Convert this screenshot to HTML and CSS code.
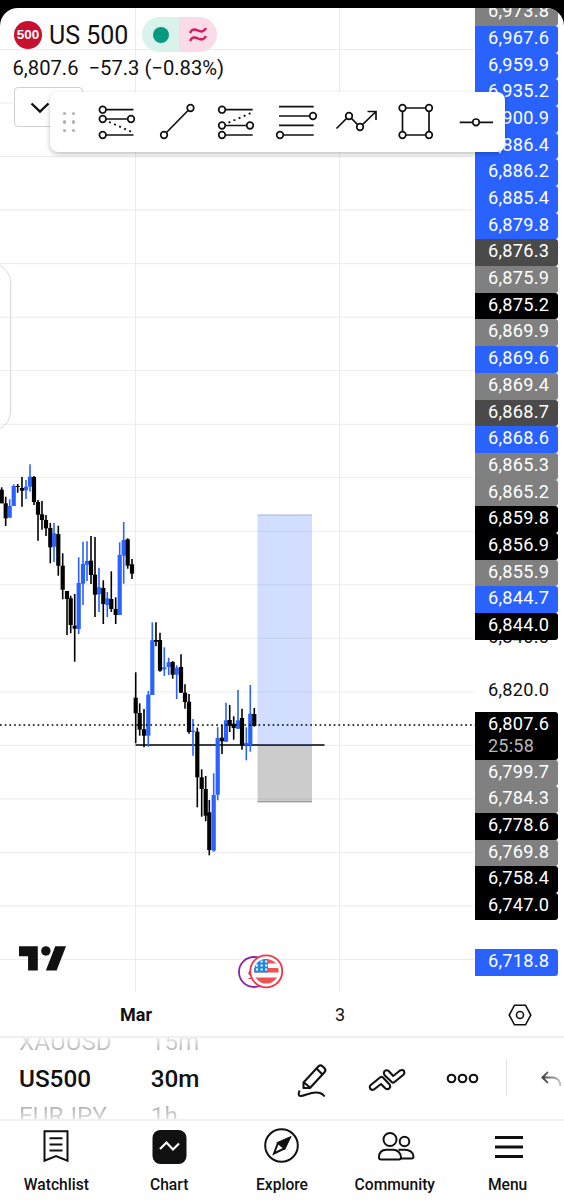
FILE: index.html
```html
<!DOCTYPE html>
<html lang="en">
<head>
    <meta charset="UTF-8">
    <meta name="viewport" content="width=device-width, initial-scale=1.0">
    <title>US 500 chart</title>
    <link rel="stylesheet" href="styles.css">
</head>
<body>

    <div class="app">
        <div class="chart">
            <div class="plot">
                <svg class="plot-svg" id="plot" width="475" height="984" viewBox="0 8 475 984"></svg>

                <div class="legend">
                    <div class="symbol-row">
                        <span class="symbol-logo">500</span>
                        <span class="symbol-name">US 500</span>
                        <span class="status">
                            <span class="status-open"><i></i></span>
                            <span class="status-approx">
                                <svg width="18" height="16" viewBox="0 0 18 16" fill="none" stroke="#d81b60" stroke-width="2.5"><path d="M1 6C3 1.5 6 2 9 3.5S15 5 17 1M1 14C3 9.5 6 10 9 11.5S15 13 17 9"/></svg>
                            </span>
                        </span>
                    </div>
                    <div class="quote"><span>6,807.6</span><span>−57.3 (−0.83%)</span></div>
                    <div class="collapse">
                        <svg width="20" height="12" viewBox="0 0 20 12" fill="none" stroke="#111" stroke-width="2.4"><path d="M1.5 1.5L10 9.5L18.5 1.5"/></svg>
                    </div>
                </div>

                <div class="side-handle"></div>

                <svg class="tv-logo" width="47" height="25" viewBox="0 0 140 73" fill="#111"><path d="M0 0H56V72H27V30H0Z"/><circle cx="80" cy="14" r="14"/><path d="M108 0H140L112 72H80Z"/></svg>

                <svg class="events" width="48" height="36" viewBox="0 0 48 36">
                    <defs><clipPath id="flag"><circle cx="29.3" cy="17.3" r="12.3"/></clipPath></defs>
                    <circle cx="17" cy="18" r="15" fill="#fff" stroke="#8e24aa" stroke-width="1.8"/>
                    <path d="M11 19h4M12.5 17v4M11.5 24.5h3" stroke="#e91e63" stroke-width="1"/>
                    <circle cx="29.3" cy="17.3" r="16" fill="#fff" stroke="#f23645" stroke-width="1.8"/>
                    <g clip-path="url(#flag)">
                        <path fill="#fff" d="M16 4h28v27H16z"/>
                        <path fill="#ef5350" d="M16 5h28v4.500H16zM16 14h28v4.500H16zM16 23.500h28v7H16z"/>
                        <path fill="#1e88e5" d="M16 4h15v14.500H16z"/>
                        <path stroke="#fff" stroke-width="1.900" stroke-dasharray="2 2.600" d="M19 7.500h12M19 11.500h12M19 15.500h12"/>
                    </g>
                </svg>

                <div class="time-axis">
                    <span class="month">Mar</span>
                    <span class="day">3</span>
                </div>
            </div>

            <div class="scale">
                <div class="labels" id="labels"></div>
                <div class="tick tick-hidden">6,840.0</div>
                <div class="tick">6,820.0</div>
                <div class="current">6,807.6<small>25:58</small></div>
                <div class="labels" id="lowerLabels"></div>
                <div class="label blue label-last">6,718.8</div>
                <div class="scale-settings">
                    <svg width="24" height="22" viewBox="0 0 24 22" fill="none" stroke="#111" stroke-width="1.6"><path d="M6.5 1.2h11L22.8 11l-5.3 9.8h-11L1.2 11z"/><circle cx="12" cy="11" r="3.5"/></svg>
                </div>
            </div>

            <div class="toolbar">
                <div class="grip"><i></i><i></i><i></i><i></i><i></i><i></i></div>
                <svg class="tool" viewBox="0 0 40 40"><path d="M7 8.700H37.500M7 18H35M7 34H37.500"/><path class="dots" d="M13 21L36 31"/><circle cx="6.7" cy="8.7" r="3.3"/><circle cx="6.7" cy="18" r="3.3"/><circle cx="35" cy="18" r="3.3"/><circle cx="6.7" cy="34" r="3.3"/></svg>
                <svg class="tool" viewBox="0 0 40 40"><path d="M8 34L34.500 7"/><circle cx="34.5" cy="7" r="3.3"/><circle cx="8" cy="34" r="3.3"/></svg>
                <svg class="tool" viewBox="0 0 40 40"><path d="M6 8.700H36.700M6 24.500H34M6 34H36.700"/><path class="dots" d="M12.500 21.700L35 12"/><circle cx="6" cy="8.7" r="3.3"/><circle cx="6" cy="24.5" r="3.3"/><circle cx="34" cy="24.5" r="3.3"/><circle cx="6" cy="34" r="3.3"/></svg>
                <svg class="tool" viewBox="0 0 40 40"><path d="M3 5.600H37.700M3 15H37M3 24.400H37.700M4 34H37.700"/><circle cx="37" cy="15" r="3.3"/><circle cx="4" cy="34" r="3.3"/></svg>
                <svg class="tool" viewBox="0 0 40 40"><path d="M.5 27.500L13 15L24 26L40 10.500M31.500 10.500H40V19"/><circle cx="13" cy="15" r="3.3"/><circle cx="24" cy="26" r="3.3"/></svg>
                <svg class="tool" viewBox="0 0 40 40"><path d="M6.500 7H33V34H6.500Z"/><circle cx="6.5" cy="7" r="3.3"/><circle cx="33" cy="7" r="3.3"/><circle cx="6.5" cy="34" r="3.3"/><circle cx="33" cy="34" r="3.3"/></svg>
                <svg class="tool" viewBox="0 0 40 40"><path d="M3.700 21.300H37"/><circle cx="20" cy="21.3" r="3.3"/></svg>
            </div>
        </div>

        <div class="picker">
            <div class="wheel wheel-symbol">
                <span>XAUUSD</span>
                <strong>US500</strong>
                <span>EURJPY</span>
            </div>
            <div class="wheel wheel-interval">
                <span>15m</span>
                <strong>30m</strong>
                <span>1h</span>
            </div>
            <div class="actions">
                <svg class="action" viewBox="0 0 40 40"><path d="M11.500 24.500L26.500 8.300Q28.500 6.500 30.500 8.300L32.500 10.300Q34.300 12.300 32.500 14.300L18 30H11.500ZM11.500 24L18 29.500M24.500 10.500L30.500 16.500"/><path d="M7.500 32.500Q5.500 38 8.500 38C13 38 17 34.500 24 34.500Q30 34.500 32.500 38.500"/></svg>
                <svg class="action" viewBox="0 0 40 40"><path d="M3.200 27.500L13 19.500Q14.500 18.300 16 19.500L22.600 26.500Q23.800 28.500 22.500 30.200Q20.500 32 18.500 30.500L14 26L7 31.500Q4.500 32.500 3.200 30.700Q2.200 29 3.200 27.500Z"/><path d="M17.400 13.300Q19.500 11.300 21.700 13L26.200 18L33 12.500Q35.500 11.200 37 13Q38 15 36.700 16.500L27.500 24Q26 25.200 24.700 24L17.400 17Q16.200 15 17.400 13.300Z"/></svg>
                <svg class="action" viewBox="0 0 40 40"><circle cx="9.5" cy="20.5" r="3.8"/><circle cx="20.5" cy="20.5" r="3.8"/><circle cx="31.5" cy="20.5" r="3.8"/></svg>
            </div>
            <div class="undo">
                <svg width="24" height="22" viewBox="0 0 24 22" fill="none" stroke="url(#fade)" stroke-width="2"><defs><linearGradient id="fade" gradientUnits="userSpaceOnUse" x1="0" y1="0" x2="24" y2="0"><stop offset="0" stop-color="#333"/><stop offset="1" stop-color="#ddd"/></linearGradient></defs><path d="M8 3L2.500 8.500L8 14M2.500 8.500H13Q20 9 20.500 17"/></svg>
            </div>
        </div>

        <div class="nav">
            <div class="nav-item">
                <svg viewBox="0 0 40 40"><path d="M8.500 4.200H31.500V33.700L20 29L8.500 33.700Z"/><path d="M13.500 11.200H26.500M13.500 17.500H26.500M13.500 23.500H26.500"/></svg>
                Watchlist
            </div>
            <div class="nav-item">
                <svg viewBox="0 0 40 40"><rect x="3.5" y="3" width="34" height="34" rx="8" fill="#111" stroke="none"/><path class="light" d="M11 22L17.500 15.500L24 22.500L30 16.500"/></svg>
                Chart
            </div>
            <div class="nav-item">
                <svg viewBox="0 0 40 40"><circle cx="19.5" cy="18.5" r="16.3"/><path d="M27.500 11L16 16L12 26.500L22.500 21.500Z"/><path d="M27.500 11L16 16L22.500 21.500Z" fill="#111"/></svg>
                Explore
            </div>
            <div class="nav-item">
                <svg viewBox="0 0 40 40"><circle cx="15" cy="12.500" r="6.500"/><circle cx="29.5" cy="14.500" r="4.800"/><path d="M4 30.500C4 25 7.500 22.800 11.500 22.800H18C22.500 22.800 26 26 26 30.500Q26 32.500 24 32.500H6Q4 32.500 4 30.500ZM23.500 22.800H30C34.500 22.800 38.500 25.500 38.500 29.500Q38.500 31.500 36.500 31.500H26"/></svg>
                Community
            </div>
            <div class="nav-item">
                <svg viewBox="0 0 40 40"><path stroke-width="3" d="M7 10.500H35M7 20H35M7 29.500H35"/></svg>
                Menu
            </div>
        </div>
    </div>

    <script>
        const BLUE = "#2962ff";
        const BLACK = "#000";

        // x, high, body top, body bottom, low, up
        const candles = [
            [1.7, 487.3, 489.7, 503.3, 503.3, 0],
            [5.7, 496.7, 503.3, 518.3, 526, 0],
            [9.7, 499.3, 506, 517.7, 517.7, 1],
            [13.7, 484.3, 486, 506, 506, 1],
            [17.7, 484, 486, 487, 492.7, 0],
            [22, 477, 488, 490.7, 506.7, 0],
            [26, 480, 486.7, 490.3, 499, 1],
            [30, 464.3, 476.7, 486.7, 491.7, 1],
            [34, 476, 477, 502, 505, 0],
            [38, 500, 502, 514.7, 540.7, 0],
            [42, 501, 514.3, 520, 529.7, 0],
            [46, 515, 520, 528.3, 536, 0],
            [50.3, 523, 528, 547.3, 563.3, 0],
            [54, 523, 533.3, 546.7, 562, 1],
            [58.3, 525.7, 534, 565.7, 575.7, 0],
            [62.7, 553.3, 565.7, 589.7, 599.3, 0],
            [67, 591, 591, 599, 635, 0],
            [70.7, 595.7, 598.3, 625, 633.3, 0],
            [74.7, 594, 625.7, 628.7, 661.7, 0],
            [78.7, 557.3, 583, 629, 634, 1],
            [83, 541.7, 564, 583.7, 605, 1],
            [87, 541.3, 561, 564.7, 581, 1],
            [91, 536, 560.7, 575, 584, 0],
            [95, 537, 574.7, 594.7, 617, 0],
            [99, 567.7, 587.3, 594.3, 612, 1],
            [103.3, 580.3, 588, 604, 624, 0],
            [107.3, 592, 598.3, 605, 617, 1],
            [111.3, 571.3, 599, 609, 612, 0],
            [115.7, 597.3, 609, 615, 624, 0],
            [119.7, 542.3, 555, 615, 615, 1],
            [123.7, 522, 540, 555.7, 583.7, 1],
            [127.7, 538.3, 539.3, 565.7, 568.7, 0],
            [132, 559, 564.3, 573.7, 579, 0],
            [135.7, 672.3, 697.7, 713.3, 743.3, 0],
            [139.7, 703.3, 713, 729.7, 735.7, 0],
            [144, 709, 729.3, 735.7, 747.3, 0],
            [148.3, 691, 694.7, 735.7, 746.7, 1],
            [152.3, 622.3, 640.3, 695, 695, 1],
            [156, 622.3, 640, 641.7, 646.3, 0],
            [160, 632.7, 640, 670.7, 671.7, 0],
            [164.3, 647.3, 667.3, 669.3, 676, 1],
            [168.7, 657.7, 662.3, 667, 675, 1],
            [172.7, 661, 662, 674.7, 678.7, 0],
            [176.7, 665.3, 667.7, 674.7, 699, 1],
            [181, 654.3, 667, 692.7, 692.7, 0],
            [185, 684.3, 692.7, 702, 708.7, 0],
            [189, 694, 701.7, 732, 733.7, 0],
            [193, 719, 730.7, 732, 755.7, 1],
            [197.3, 727.7, 731.7, 777.3, 807.3, 0],
            [201.7, 769.3, 777.3, 789, 816.7, 0],
            [205.7, 776, 789, 815.7, 821.3, 0],
            [209.3, 800, 812.3, 850, 855.3, 0],
            [213.7, 773.3, 795, 850.7, 851.7, 1],
            [217.7, 727.3, 738, 794.7, 800.3, 1],
            [222, 725, 737.7, 741.3, 754, 0],
            [226, 702.7, 720.3, 741.7, 741.7, 1],
            [229.7, 705, 720, 725.7, 732, 0],
            [233.7, 716.3, 723.7, 728, 739.7, 0],
            [238, 690, 720.3, 728.7, 729, 1],
            [242, 708.7, 718, 745.3, 749.7, 0],
            [246.3, 727.3, 743, 744.7, 760.3, 1],
            [250.3, 685, 713.7, 744.7, 751.7, 1],
            [254.3, 708, 714, 726, 726.7, 0]
        ];

        const labels = [
            ["6,973.8", "gray"], ["6,967.6", "blue"], ["6,959.9", "blue"], ["6,935.2", "blue"],
            ["6,900.9", "blue"], ["6,886.4", "blue"], ["6,886.2", "blue"], ["6,885.4", "blue"],
            ["6,879.8", "blue"], ["6,876.3", "dark"], ["6,875.9", "gray"], ["6,875.2", "black"],
            ["6,869.9", "gray"], ["6,869.6", "blue"], ["6,869.4", "gray"], ["6,868.7", "dark"],
            ["6,868.6", "blue"], ["6,865.3", "gray"], ["6,865.2", "gray"], ["6,859.8", "black"],
            ["6,856.9", "black"], ["6,855.9", "gray"], ["6,844.7", "blue"], ["6,844.0", "black"]
        ];

        const lowerLabels = [
            ["6,799.7", "gray"], ["6,784.3", "gray"], ["6,778.6", "black"],
            ["6,769.8", "gray"], ["6,758.4", "black"], ["6,747.0", "black"]
        ];

        function renderPlot() {
            let svg = "";
            // grid
            for (let i = 0; i < 18; i++) {
                const y = 49.5 + i * 53.53;
                svg += `<path d="M0 ${y}H474" stroke="#ececec"/>`;
            }
            svg += `<path d="M135.5 8V992M339.5 8V992" stroke="#ececec"/>`;
            // support line
            svg += `<path d="M135.5 745H324.5" stroke="#000" stroke-width="1.7"/>`;
            candles.forEach(([x, high, top, bottom, low, up]) => {
                const color = up ? BLUE : BLACK;
                svg += `<path d="M${x} ${high}V${low}" stroke="${color}" stroke-width="1.6"/>`;
                svg += `<rect x="${x - 2.1}" y="${top}" width="4.2" height="${bottom - top}" fill="${color}"/>`;
            });
            // long position
            svg += `<rect x="257.5" y="514.5" width="54.5" height="230.5" fill="#2962ff" fill-opacity=".21"/>`;
            svg += `<rect x="257.5" y="745" width="54.5" height="57" fill="#000" fill-opacity=".2"/>`;
            svg += `<path d="M257.5 515H312" stroke="#2b3f9e" stroke-opacity=".25"/>`;
            svg += `<path d="M257.5 801.8H312" stroke="#888"/>`;
            // last price
            svg += `<path d="M0 725H475" stroke="#000" stroke-width="1.7" stroke-dasharray="1.7 3"/>`;
            document.getElementById("plot").innerHTML = svg;
        }

        function renderLabels(id, items) {
            document.getElementById(id).innerHTML = items.map(([price, color]) => `<div class="label ${color}">${price}</div>`).join("");
        }

        renderPlot();
        renderLabels("labels", labels);
        renderLabels("lowerLabels", lowerLabels);
    </script>

</body>
</html>
```
FILE: styles.css
```css
* {
    box-sizing: border-box;
}
body {
    margin: 0;
    padding-top: 8px;
    background: #000;
    font-family: Roboto, "Liberation Sans", sans-serif;
    color: #111;
}
svg {
    display: block;
}
.app {
    width: 564px;
    height: 1192px;
    background: #fff;
    border-radius: 18px 18px 0 0;
    overflow: hidden;
}
.chart {
    position: relative;
    display: flex;
    height: 1028px;
}
.plot {
    position: relative;
    width: 475px;
}

/* legend */
.legend {
    position: absolute;
    top: 9px;
    left: 14px;
}
.symbol-row {
    display: flex;
    align-items: center;
    height: 35px;
}
.symbol-logo {
    width: 28px;
    height: 28px;
    border-radius: 50%;
    background: #c8102e;
    color: #fff;
    font: bold 13.5px/28px "Liberation Sans", sans-serif;
    text-align: center;
}
.symbol-name {
    width: 93px;
    padding-left: 7px;
    font-size: 25px;
    line-height: 35px;
    padding-top: 1px;
    white-space: nowrap;
}
.status {
    display: flex;
    width: 75px;
    height: 35px;
    margin-left: 6.5px;
    border-radius: 18px;
    overflow: hidden;
}
.status span {
    display: flex;
    align-items: center;
    justify-content: center;
    width: 50%;
}
.status-open {
    background: #d9f2ec;
}
.status-open i {
    width: 16px;
    height: 16px;
    margin-left: 2px;
    border-radius: 50%;
    background: #089981;
}
.status-approx {
    background: #fadbe7;
}
.quote {
    display: flex;
    gap: 10px;
    margin-left: -1.5px;
    height: 34.5px;
    line-height: 32px;
    font-size: 20.2px;
    white-space: nowrap;
}
.collapse {
    width: 69px;
    height: 40px;
    padding: 14px 0 0 15px;
    background: #fff;
    border: 1px solid #d0d0d0;
    border-radius: 4px;
}
.side-handle {
    position: absolute;
    top: 255px;
    left: -30px;
    width: 41px;
    height: 168px;
    border: 1px solid #ddd;
    border-radius: 20px;
    box-shadow: 0 0 2px rgba(0,0,0,0.1);
}
.tv-logo {
    position: absolute;
    top: 938px;
    left: 19px;
}
.events {
    position: absolute;
    top: 946px;
    left: 237px;
}
.time-axis {
    display: flex;
    height: 44px;
    line-height: 45px;
    font-size: 18px;
    text-align: center;
}
.month {
    width: 272px;
    font-weight: 700;
}
.day {
    width: 136px;
}

/* price scale */
.scale {
    width: 83px;
    font-size: 18.2px;
    letter-spacing: 0.25px;
}
.labels {
    position: relative;
    z-index: 1;
}
#labels {
    margin-top: -8.8px;
}
.label {
    height: 26.7px;
    padding-left: 13px;
    line-height: 24.5px;
    color: #fff;
    border-radius: 0 3px 3px 0;
}
.blue {
    background: #2962ff;
}
.gray {
    background: #808080;
}
.dark {
    background: #4a4a4a;
}
.black {
    background: #000;
}
.tick {
    height: 26px;
    margin-top: 27px;
    padding-left: 13px;
    line-height: 26px;
}
.tick-hidden {
    margin-top: -16px;
}
.current {
    height: 48px;
    margin-top: 9px;
    padding: 1px 0 0 13px;
    line-height: 22px;
    color: #fff;
    background: #000;
    border-radius: 0 3px 3px 0;
}
.current small {
    display: block;
    font-size: 18px;
    color: #b8b8b8;
}
.label-last {
    margin-top: 29px;
}
.scale-settings {
    display: flex;
    margin: 28px 0 0 33px;
}

/* favourite drawing tools */
.toolbar {
    position: absolute;
    z-index: 2;
    top: 84px;
    left: 50px;
    display: flex;
    gap: 20px;
    width: 455px;
    height: 60px;
    padding: 9px 0 0 12px;
    background: #fff;
    border-radius: 8px;
    box-shadow: 0 2px 5px rgba(0,0,0,0.25);
}
.grip {
    display: grid;
    grid-template-columns: 3px 3px;
    gap: 5px 6px;
    align-content: start;
    width: 14px;
    padding: 11px 0 0 1px;
}
.grip i {
    width: 3.4px;
    height: 3.4px;
    border-radius: 50%;
    background: #b0b0b0;
}
.tool {
    flex: none;
    width: 40px;
    height: 40px;
    overflow: visible;
    fill: none;
    stroke: #111;
    stroke-width: 1.7;
}
.tool circle {
    fill: #fff;
}
.dots {
    stroke-width: 1.8;
    stroke-dasharray: 2 3.5;
}

/* symbol and interval picker */
.picker {
    display: flex;
    height: 85px;
    border-top: 2px solid #f0f0f0;
    border-bottom: 2px solid #f0f0f0;
    overflow: hidden;
}
.wheel {
    height: 81px;
    overflow: hidden;
    font-size: 24.3px;
    line-height: 37px;
}
.wheel span,
.wheel strong {
    display: block;
    height: 37px;
    margin-top: -15px;
    font-weight: 500;
}
.wheel strong,
.wheel span:last-child {
    margin-top: 0;
}
.wheel span {
    font-weight: 400;
    color: transparent;
    background: linear-gradient(#fff 25%, #909090);
    background-clip: text;
    -webkit-background-clip: text;
}
.wheel span:last-child {
    background-image: linear-gradient(#909090, #fff 85%);
}
.wheel-symbol {
    width: 151px;
    padding-left: 19px;
}
.wheel-interval {
    width: 142px;
}
.actions {
    display: flex;
    gap: 35px;
    width: 214px;
    padding-top: 20px;
}
.action {
    width: 40px;
    height: 40px;
    overflow: visible;
    fill: none;
    stroke: #111;
    stroke-width: 2.1;
    stroke-linejoin: round;
}
.undo {
    height: 37px;
    margin-top: 21px;
    padding: 10px 0 0 33px;
    border-left: 1px solid #e4e4e4;
}

/* bottom navigation */
.nav {
    display: flex;
    height: 79px;
    padding-top: 6px;
}
.nav-item {
    display: flex;
    flex-direction: column;
    align-items: center;
    width: 20%;
    font-size: 15.6px;
    font-weight: 500;
    line-height: 20px;
}
.nav-item svg {
    width: 40px;
    height: 40px;
    margin-bottom: 8px;
    fill: none;
    stroke: #111;
    stroke-width: 2;
}
.nav-item .light {
    stroke: #fff;
    stroke-width: 2.2;
}
```
